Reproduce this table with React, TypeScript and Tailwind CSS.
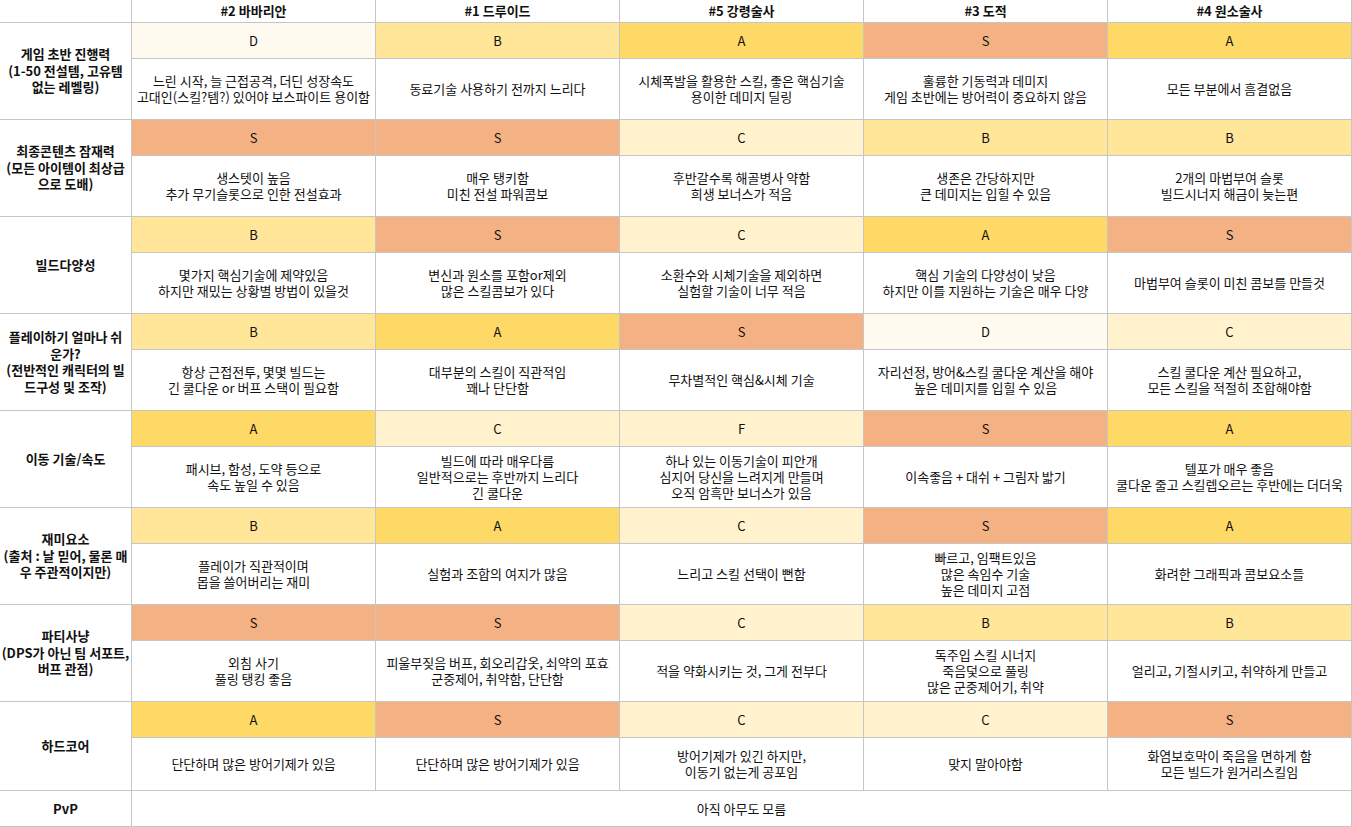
import React from "react";

type Row = { label: string[]; grades: string[]; descs: string[][] };

const gradeBg: Record<string, string> = {
  S: "bg-[#f4b183]",
  A: "bg-[#ffd966]",
  B: "bg-[#ffe699]",
  C: "bg-[#fff2cc]",
  F: "bg-[#fff2cc]",
  D: "bg-[#fffaf0]",
};

const headers = ["#2 바바리안", "#1 드루이드", "#5 강령술사", "#3 도적", "#4 원소술사"];

const rows: Row[] = [
  {
    label: ["게임 초반 진행력", "(1-50 전설템, 고유템", "없는 레벨링)"],
    grades: ["D", "B", "A", "S", "A"],
    descs: [
      ["느린 시작, 늘 근접공격, 더딘 성장속도", "고대인(스킬?템?) 있어야 보스파이트 용이함"],
      ["동료기술 사용하기 전까지 느리다"],
      ["시체폭발을 활용한 스킬, 좋은 핵심기술", "용이한 데미지 딜링"],
      ["훌륭한 기동력과 데미지", "게임 초반에는 방어력이 중요하지 않음"],
      ["모든 부분에서 흠결없음"],
    ],
  },
  {
    label: ["최종콘텐츠 잠재력", "(모든 아이템이 최상급", "으로 도배)"],
    grades: ["S", "S", "C", "B", "B"],
    descs: [
      ["생스텟이 높음", "추가 무기슬롯으로 인한 전설효과"],
      ["매우 탱키함", "미친 전설 파워콤보"],
      ["후반갈수록 해골병사 약함", "희생 보너스가 적음"],
      ["생존은 간당하지만", "큰 데미지는 입힐 수 있음"],
      ["2개의 마법부여 슬롯", "빌드시너지 해금이 늦는편"],
    ],
  },
  {
    label: ["빌드다양성"],
    grades: ["B", "S", "C", "A", "S"],
    descs: [
      ["몇가지 핵심기술에 제약있음", "하지만 재밌는 상황별 방법이 있을것"],
      ["변신과 원소를 포함or제외", "많은 스킬콤보가 있다"],
      ["소환수와 시체기술을 제외하면", "실험할 기술이 너무 적음"],
      ["핵심 기술의 다양성이 낮음", "하지만 이를 지원하는 기술은 매우 다양"],
      ["마법부여 슬롯이 미친 콤보를 만들것"],
    ],
  },
  {
    label: ["플레이하기 얼마나 쉬", "운가?", "(전반적인 캐릭터의 빌", "드구성 및 조작)"],
    grades: ["B", "A", "S", "D", "C"],
    descs: [
      ["항상 근접전투, 몇몇 빌드는", "긴 쿨다운 or 버프 스택이 필요함"],
      ["대부분의 스킬이 직관적임", "꽤나 단단함"],
      ["무차별적인 핵심&시체 기술"],
      ["자리선정, 방어&스킬 쿨다운 계산을 해야", "높은 데미지를 입힐 수 있음"],
      ["스킬 쿨다운 계산 필요하고,", "모든 스킬을 적절히 조합해야함"],
    ],
  },
  {
    label: ["이동 기술/속도"],
    grades: ["A", "C", "F", "S", "A"],
    descs: [
      ["패시브, 함성, 도약 등으로", "속도 높일 수 있음"],
      ["빌드에 따라 매우다름", "일반적으로는 후반까지 느리다", "긴 쿨다운"],
      ["하나 있는 이동기술이 피안개", "심지어 당신을 느려지게 만들며", "오직 암흑만 보너스가 있음"],
      ["이속좋음 + 대쉬 + 그림자 밟기"],
      ["텔포가 매우 좋음", "쿨다운 줄고 스킬렙오르는 후반에는 더더욱"],
    ],
  },
  {
    label: ["재미요소", "(출처 : 날 믿어, 물론 매", "우 주관적이지만)"],
    grades: ["B", "A", "C", "S", "A"],
    descs: [
      ["플레이가 직관적이며", "몹을 쓸어버리는 재미"],
      ["실험과 조합의 여지가 많음"],
      ["느리고 스킬 선택이 뻔함"],
      ["빠르고, 임팩트있음", "많은 속임수 기술", "높은 데미지 고점"],
      ["화려한 그래픽과 콤보요소들"],
    ],
  },
  {
    label: ["파티사냥", "(DPS가 아닌 팀 서포트,", "버프 관점)"],
    grades: ["S", "S", "C", "B", "B"],
    descs: [
      ["외침 사기", "풀링 탱킹 좋음"],
      ["피울부짖음 버프, 회오리갑옷, 쇠약의 포효", "군중제어, 취약함, 단단함"],
      ["적을 약화시키는 것, 그게 전부다"],
      ["독주입 스킬 시너지", "죽음덫으로 풀링", "많은 군중제어기, 취약"],
      ["얼리고, 기절시키고, 취약하게 만들고"],
    ],
  },
  {
    label: ["하드코어"],
    grades: ["A", "S", "C", "C", "S"],
    descs: [
      ["단단하며 많은 방어기제가 있음"],
      ["단단하며 많은 방어기제가 있음"],
      ["방어기제가 있긴 하지만,", "이동기 없는게 공포임"],
      ["맞지 말아야함"],
      ["화염보호막이 죽음을 면하게 함", "모든 빌드가 원거리스킬임"],
    ],
  },
];

export default function App() {
  return (
    <div
      className="w-[1352px] h-[827px] bg-white text-[#111] text-[13px] leading-[16px]"
      style={{ fontFamily: '"Noto Sans CJK KR", "Noto Sans", sans-serif' }}
    >
      <div className="grid grid-cols-[131px_repeat(5,243px)] grid-rows-[22px_repeat(7,35px_60px)_35px_52px_35px] gap-px bg-[#c6c6c6] pr-px pb-px w-[1352px]">
        <div className="bg-white" />
        {headers.map((h) => (
          <div key={h} className="bg-white flex items-center justify-center font-bold">
            {h}
          </div>
        ))}
        {rows.map((r, i) => (
          <React.Fragment key={i}>
            <div className="row-span-2 bg-white flex flex-col items-center justify-center text-center font-bold leading-[16.5px]">
              {r.label.map((l, j) => (
                <span key={j} className="whitespace-nowrap">
                  {l}
                </span>
              ))}
            </div>
            {r.grades.map((g, j) => (
              <div key={"g" + j} className={`${gradeBg[g]} flex items-center justify-center`}>
                {g}
              </div>
            ))}
            {r.descs.map((d, j) => (
              <div key={"d" + j} className="bg-white flex flex-col items-center justify-center text-center">
                {d.map((l, k) => (
                  <span key={k} className="whitespace-nowrap">
                    {l}
                  </span>
                ))}
              </div>
            ))}
          </React.Fragment>
        ))}
        <div className="bg-white flex items-center justify-center font-bold">PvP</div>
        <div className="col-span-5 bg-white flex items-center justify-center">아직 아무도 모름</div>
      </div>
    </div>
  );
}
